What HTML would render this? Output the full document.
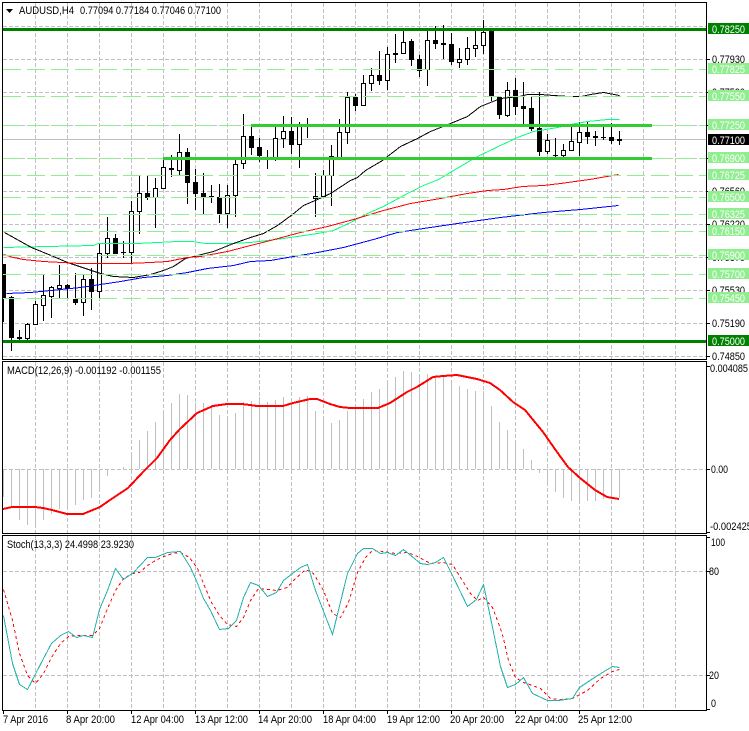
<!DOCTYPE html>
<html>
<head>
<meta charset="utf-8">
<style>
html,body{margin:0;padding:0;background:#fff;width:749px;height:731px;overflow:hidden}
svg{display:block}
text{font-family:"Liberation Sans",sans-serif;font-size:11px;fill:#000}
.w{fill:#fff}
</style>
</head>
<body>
<svg width="749" height="731" viewBox="0 0 749 731" xmlns="http://www.w3.org/2000/svg">
<rect width="749" height="731" fill="#fff"/>

<!-- grid -->
<g shape-rendering="crispEdges" stroke="#c0c0c0" stroke-width="1" stroke-dasharray="4 2" fill="none">
<path d="M35.5 3V359M67.5 3V359M99.5 3V359M131.5 3V359M163.5 3V359M195.5 3V359M227.5 3V359M259.5 3V359M291.5 3V359M323.5 3V359M355.5 3V359M387.5 3V359M419.5 3V359M451.5 3V359M483.5 3V359M515.5 3V359M547.5 3V359M579.5 3V359M611.5 3V359M643.5 3V359M675.5 3V359"/>
<path d="M3 26.5H706M3 59.5H706M3 92.5H706M3 125.5H706M3 158.5H706M3 191.5H706M3 224.5H706M3 257.5H706M3 290.5H706M3 323.5H706M3 356.5H706"/>
<path d="M35.5 362V533M67.5 362V533M99.5 362V533M131.5 362V533M163.5 362V533M195.5 362V533M227.5 362V533M259.5 362V533M291.5 362V533M323.5 362V533M355.5 362V533M387.5 362V533M419.5 362V533M451.5 362V533M483.5 362V533M515.5 362V533M547.5 362V533M579.5 362V533M611.5 362V533M643.5 362V533M675.5 362V533"/>
<path d="M3 469.5H706"/>
<path d="M35.5 536V710M67.5 536V710M99.5 536V710M131.5 536V710M163.5 536V710M195.5 536V710M227.5 536V710M259.5 536V710M291.5 536V710M323.5 536V710M355.5 536V710M387.5 536V710M419.5 536V710M451.5 536V710M483.5 536V710M515.5 536V710M547.5 536V710M579.5 536V710M611.5 536V710M643.5 536V710M675.5 536V710"/>
<path d="M3 571.5H706M3 675.5H706"/>
</g>
<path shape-rendering="crispEdges" stroke="#c0c0c0" d="M3 139.5H706"/>

<!-- candles -->
<g shape-rendering="crispEdges">
<path stroke="#000" fill="none" d="M3.5 264V322M11.5 296V351M19.5 330V342M27.5 323V343M35.5 301V325M43.5 275V321M51.5 286V318M59.5 265V299M67.5 284V299M75.5 273V305M83.5 274V316M91.5 268V310M99.5 244V298M107.5 217V258M115.5 234V254M123.5 241V258M131.5 201V263M139.5 175V234M147.5 175V200M155.5 178V228M163.5 159V189M171.5 155V177M179.5 134V175M187.5 148V204M195.5 169V210M203.5 173V214M211.5 185V203M219.5 184V223M227.5 185V228M235.5 158V217M243.5 114V169M251.5 127V155M259.5 138V162M267.5 150V169M275.5 124V161M283.5 116V148M291.5 117V154M299.5 122V168M307.5 118V138M315.5 173V217M323.5 170V198M331.5 145V206M339.5 119V158M347.5 92V144M355.5 94V111M363.5 75V106M371.5 68V91M379.5 51V85M387.5 47V90M395.5 34V63M403.5 28V54M411.5 39V66M419.5 55V77M427.5 31V86M435.5 26V49M443.5 25V59M451.5 33V65M459.5 48V68M467.5 37V65M475.5 28V57M483.5 20V54M491.5 28V101M499.5 97V119M507.5 82V117M515.5 78V115M523.5 82V127M531.5 96V131M539.5 92V156M547.5 134V154M555.5 138V159M563.5 144V159M571.5 124V151M579.5 122V156M587.5 121V144M595.5 131V146M603.5 127V140M611.5 123V144M619.5 131V145"/>
<path fill="#000" d="M3 264h3v34h-3zM9 297h5v41h-5zM17 337h5v2h-5zM65 285h5v4h-5zM73 299h5v4h-5zM89 279h5v13h-5zM113 238h5v16h-5zM121 252h5v1h-5zM145 193h5v5h-5zM169 168h5v2h-5zM185 152h5v31h-5zM193 182h5v12h-5zM201 193h5v5h-5zM209 196h5v1h-5zM217 197h5v17h-5zM249 136h5v12h-5zM257 147h5v9h-5zM265 158h5v1h-5zM289 131h5v14h-5zM305 125h5v2h-5zM353 97h5v9h-5zM377 75h5v6h-5zM393 53h5v2h-5zM409 41h5v19h-5zM417 59h5v12h-5zM433 40h5v4h-5zM441 43h5v2h-5zM449 44h5v18h-5zM489 31h5v66h-5zM497 97h5v18h-5zM513 90h5v17h-5zM521 106h5v3h-5zM529 108h5v21h-5zM537 128h5v24h-5zM553 155h5v1h-5zM585 132h5v5h-5zM593 136h5v2h-5zM601 137h5v1h-5zM609 137h5v4h-5zM617 139h5v2h-5z"/>
<path fill="#fff" stroke="#000" d="M25.5 324.5h4v14h-4zM33.5 304.5h4v20h-4zM41.5 295.5h4v10h-4zM49.5 287.5h4v9h-4zM57.5 285.5h4v3h-4zM81.5 279.5h4v23h-4zM97.5 253.5h4v38h-4zM105.5 238.5h4v15h-4zM129.5 211.5h4v41h-4zM137.5 193.5h4v18h-4zM153.5 188.5h4v9h-4zM161.5 167.5h4v21h-4zM177.5 152.5h4v18h-4zM225.5 195.5h4v18h-4zM233.5 164.5h4v31h-4zM241.5 136.5h4v27h-4zM273.5 138.5h4v20h-4zM281.5 131.5h4v7h-4zM297.5 126.5h4v18h-4zM313.5 196.5h4v2h-4zM321.5 175.5h4v21h-4zM329.5 156.5h4v19h-4zM337.5 132.5h4v25h-4zM345.5 97.5h4v35h-4zM361.5 83.5h4v22h-4zM369.5 75.5h4v8h-4zM385.5 54.5h4v26h-4zM401.5 42.5h4v11h-4zM425.5 40.5h4v29h-4zM457.5 59.5h4v3h-4zM465.5 48.5h4v11h-4zM473.5 45.5h4v3h-4zM481.5 32.5h4v13h-4zM505.5 90.5h4v25h-4zM545.5 140.5h4v11h-4zM561.5 150.5h4v5h-4zM569.5 141.5h4v9h-4zM577.5 132.5h4v10h-4z"/>
</g>

<!-- moving averages -->
<g shape-rendering="crispEdges" fill="none" stroke-width="1" transform="translate(.5 .5)">
<polyline stroke="#00ff7f" points="3,247 47,246 93,245 98,243 137,243 157,242 177,241 192,241 205,243 230,243 250,242 283,238 317,233 333,230 350,222 367,213 383,206 407,193 423,185 438,179 470,160 477,156 500,145 517,137 533,131 557,127 570,124 587,121 607,119 619,119"/>
<polyline stroke="#000" points="4,232 31,247 53,256 67,262 100,273 113,276 133,277 150,274 163,270 173,266 185,258 197,255 213,251 233,243 250,237 263,233 277,225 292,214 303,205 317,199 330,193 350,180 357,177 365,170 382,160 387,156 400,146 417,138 430,131 450,123 467,116 480,106 500,98 519,96 527,94 540,94 553,95 568,96 581,96 590,94 603,92 619,95"/>
<polyline stroke="#f00" points="3,254 13,257 23,259 43,261 80,263 127,263 150,262 167,261 187,257 200,256 227,251 250,245 270,240 300,232 327,226 353,219 383,210 410,203 440,198 467,193 487,190 503,189 522,186 543,185 560,183 589,179 618,174"/>
<polyline stroke="#00f" points="6,293 30,292 60,289 80,287 100,284 120,281 143,277 167,275 187,272 207,268 233,265 250,261 270,260 293,256 317,252 343,247 373,239 397,232 423,228 457,223 500,217 517,215 543,212 580,209 618,205"/>
</g>

<!-- horizontal levels -->
<g shape-rendering="crispEdges" fill="none">
<path stroke="#90ee90" stroke-dasharray="18 6" d="M3 69.5H706M3 96.5H706M3 125.5H706M3 158.5H706M3 175.5H706M3 197.5H706M3 214.5H706M3 231.5H706M3 255.5H706M3 274.5H706M3 298.5H706"/>
<path stroke="#32cd32" stroke-width="3" d="M251 125.5H652M163 158.5H652"/>
<path stroke="#008000" stroke-width="3" d="M3 29.5H706M3 341.5H706"/>
</g>

<!-- MACD -->
<path shape-rendering="crispEdges" stroke="#c0c0c0" fill="none" d="M3.5 469V497M11.5 469V508M19.5 469V520M27.5 469V525M35.5 469V528M43.5 469V520M51.5 469V514M59.5 469V509M67.5 469V510M75.5 469V505M83.5 469V500M91.5 469V498M99.5 469V488M107.5 469V476M123.5 469V467M131.5 469V452M139.5 469V440M147.5 469V431M155.5 469V422M163.5 469V410M171.5 469V403M179.5 469V394M187.5 469V395M195.5 469V403M203.5 469V403M211.5 469V405M219.5 469V415M227.5 469V416M235.5 469V413M243.5 469V402M251.5 469V401M259.5 469V397M267.5 469V402M275.5 469V400M283.5 469V397M291.5 469V404M299.5 469V397M307.5 469V396M315.5 469V411M323.5 469V420M331.5 469V423M339.5 469V420M347.5 469V411M355.5 469V405M363.5 469V399M371.5 469V392M379.5 469V389M387.5 469V380M395.5 469V377M403.5 469V371M411.5 469V372M419.5 469V374M427.5 469V374M435.5 469V375M443.5 469V375M451.5 469V380M459.5 469V386M467.5 469V389M475.5 469V391M483.5 469V391M491.5 469V406M499.5 469V422M507.5 469V430M515.5 469V440M523.5 469V449M531.5 469V460M539.5 469V473M547.5 469V484M555.5 469V492M563.5 469V498M571.5 469V501M579.5 469V502M587.5 469V501M595.5 469V501M603.5 469V499M611.5 469V499M619.5 469V498"/>
<polyline shape-rendering="crispEdges" fill="none" stroke="#f00" stroke-width="2" points="3,509 12,507 35,507 43,508 52,510 67,514 83,514 100,507 110,500 128,488 143,472 157,458 170,440 180,429 197,413 213,406 227,404 242,404 250,405 257,406 283,406 293,403 310,399 317,399 330,404 340,407 350,408 378,408 390,403 407,392 417,387 433,377 443,376 457,375 477,379 490,383 500,390 513,402 525,410 543,432 557,452 568,467 580,478 595,490 607,497 619,499"/>

<!-- Stoch -->
<g shape-rendering="crispEdges" fill="none" transform="translate(.5 .5)">
<polyline stroke="#f00" stroke-dasharray="3 3" points="3,589 12,620 19,653 27,675 35,683 43,673 51,657 60,643 68,636 76,635 92,635 99,628 107,608 115,590 123,578 132,573 139,572 147,565 155,560 163,556 172,553 180,552 189,557 197,568 203,583 211,602 219,615 227,624 236,626 243,617 250,600 258,588 267,589 276,590 287,587 293,580 305,569 313,573 323,590 332,613 340,617 348,602 357,572 365,557 372,550 383,551 395,553 407,552 417,556 430,563 443,562 452,564 460,577 470,593 477,600 483,597 492,607 500,628 503,638 508,660 515,677 523,682 532,685 540,688 550,698 558,699 572,698 587,690 600,678 612,671 619,669"/>
<polyline stroke="#20b2aa" points="3,615 12,663 19,684 27,689 43,658 51,643 60,635 68,631 76,637 83,635 92,637 99,609 107,590 115,568 123,579 133,572 147,557 155,557 167,552 180,551 190,567 195,578 203,598 210,610 219,629 228,628 236,620 243,597 250,582 258,585 267,596 276,592 283,580 292,573 300,567 307,564 315,590 332,634 347,573 357,553 363,548 372,548 380,553 387,552 395,555 403,549 420,563 427,564 435,562 443,557 452,575 467,606 476,599 483,584 490,617 500,666 507,687 515,684 523,677 532,693 547,700 558,700 572,698 579,687 597,675 612,666 619,667"/>
</g>

<!-- frames -->
<path shape-rendering="crispEdges" fill="none" stroke="#000" d="M2.5 2.5H706.5V359.5H2.5ZM2.5 361.5H706.5V533.5H2.5ZM2.5 535.5H706.5V710.5H2.5Z"/>

<!-- ticks -->
<path shape-rendering="crispEdges" fill="none" stroke="#000" d="M707 59.5h3M707 92.5h3M707 125.5h3M707 158.5h3M707 191.5h3M707 224.5h3M707 257.5h3M707 290.5h3M707 323.5h3M707 356.5h3M707 366.5h3M707 469.5h3M707 532.5h3M707 537.5h3M707 571.5h3M707 675.5h3M707 709.5h3M3.5 711v3M67.5 711v3M131.5 711v3M195.5 711v3M259.5 711v3M323.5 711v3M387.5 711v3M451.5 711v3M515.5 711v3M579.5 711v3"/>

<!-- header text -->
<path d="M6 9h7l-3.5 4z" fill="#000"/>
<text x="19" y="14" textLength="55" lengthAdjust="spacingAndGlyphs">AUDUSD,H4</text>
<text x="80" y="14" textLength="141" lengthAdjust="spacingAndGlyphs">0.77094 0.77184 0.77046 0.77100</text>
<text x="7" y="374" textLength="154" lengthAdjust="spacingAndGlyphs">MACD(12,26,9) -0.001192 -0.001155</text>
<text x="7" y="548" textLength="127" lengthAdjust="spacingAndGlyphs">Stoch(13,3,3) 24.4998 23.9230</text>

<!-- right axis -->
<g>
<text x="712" y="63" textLength="33" lengthAdjust="spacingAndGlyphs">0.77930</text>
<text x="712" y="96" textLength="33" lengthAdjust="spacingAndGlyphs">0.77590</text>
<text x="712" y="195" textLength="33" lengthAdjust="spacingAndGlyphs">0.76560</text>
<text x="712" y="228" textLength="33" lengthAdjust="spacingAndGlyphs">0.76220</text>
<text x="712" y="261" textLength="33" lengthAdjust="spacingAndGlyphs">0.75870</text>
<text x="712" y="294" textLength="33" lengthAdjust="spacingAndGlyphs">0.75530</text>
<text x="712" y="327" textLength="33" lengthAdjust="spacingAndGlyphs">0.75190</text>
<text x="712" y="360" textLength="33" lengthAdjust="spacingAndGlyphs">0.74850</text>
</g>
<g shape-rendering="crispEdges">
<rect x="708" y="23" width="41" height="11" fill="#008000"/>
<rect x="708" y="63" width="41" height="11" fill="#90ee90"/>
<rect x="708" y="90" width="41" height="11" fill="#90ee90"/>
<rect x="708" y="119" width="41" height="11" fill="#90ee90"/>
<rect x="708" y="134" width="41" height="11" fill="#000"/>
<rect x="708" y="152" width="41" height="11" fill="#90ee90"/>
<rect x="708" y="169" width="41" height="11" fill="#90ee90"/>
<rect x="708" y="191" width="41" height="11" fill="#90ee90"/>
<rect x="708" y="208" width="41" height="11" fill="#90ee90"/>
<rect x="708" y="225" width="41" height="11" fill="#90ee90"/>
<rect x="708" y="249" width="41" height="11" fill="#90ee90"/>
<rect x="708" y="268" width="41" height="11" fill="#90ee90"/>
<rect x="708" y="292" width="41" height="11" fill="#90ee90"/>
<rect x="708" y="335" width="41" height="11" fill="#008000"/>
</g>
<g class="w">
<text class="w" x="712" y="33" textLength="33" lengthAdjust="spacingAndGlyphs">0.78250</text>
<text class="w" x="712" y="73" textLength="33" lengthAdjust="spacingAndGlyphs">0.77825</text>
<text class="w" x="712" y="100" textLength="33" lengthAdjust="spacingAndGlyphs">0.77550</text>
<text class="w" x="712" y="129" textLength="33" lengthAdjust="spacingAndGlyphs">0.77250</text>
<text class="w" x="712" y="144" textLength="33" lengthAdjust="spacingAndGlyphs">0.77100</text>
<text class="w" x="712" y="162" textLength="33" lengthAdjust="spacingAndGlyphs">0.76900</text>
<text class="w" x="712" y="179" textLength="33" lengthAdjust="spacingAndGlyphs">0.76725</text>
<text class="w" x="712" y="201" textLength="33" lengthAdjust="spacingAndGlyphs">0.76500</text>
<text class="w" x="712" y="218" textLength="33" lengthAdjust="spacingAndGlyphs">0.76325</text>
<text class="w" x="712" y="235" textLength="33" lengthAdjust="spacingAndGlyphs">0.76150</text>
<text class="w" x="712" y="259" textLength="33" lengthAdjust="spacingAndGlyphs">0.75900</text>
<text class="w" x="712" y="278" textLength="33" lengthAdjust="spacingAndGlyphs">0.75700</text>
<text class="w" x="712" y="302" textLength="33" lengthAdjust="spacingAndGlyphs">0.75450</text>
<text class="w" x="712" y="345" textLength="33" lengthAdjust="spacingAndGlyphs">0.75000</text>
</g>

<!-- indicator axis -->
<text x="710" y="372" textLength="38" lengthAdjust="spacingAndGlyphs">0.004085</text>
<text x="711" y="473" textLength="17" lengthAdjust="spacingAndGlyphs">0.00</text>
<text x="710" y="530" textLength="42" lengthAdjust="spacingAndGlyphs">-0.002425</text>
<text x="711" y="546" textLength="14" lengthAdjust="spacingAndGlyphs">100</text>
<text x="709" y="575" textLength="10" lengthAdjust="spacingAndGlyphs">80</text>
<text x="709" y="679" textLength="10" lengthAdjust="spacingAndGlyphs">20</text>
<text x="711" y="707" textLength="5" lengthAdjust="spacingAndGlyphs">0</text>

<!-- time axis -->
<text x="3" y="723" textLength="45" lengthAdjust="spacingAndGlyphs">7 Apr 2016</text>
<text x="66" y="723" textLength="49" lengthAdjust="spacingAndGlyphs">8 Apr 20:00</text>
<text x="131" y="723" textLength="53" lengthAdjust="spacingAndGlyphs">12 Apr 04:00</text>
<text x="195" y="723" textLength="53" lengthAdjust="spacingAndGlyphs">13 Apr 12:00</text>
<text x="258" y="723" textLength="54" lengthAdjust="spacingAndGlyphs">14 Apr 20:00</text>
<text x="323" y="723" textLength="53" lengthAdjust="spacingAndGlyphs">18 Apr 04:00</text>
<text x="387" y="723" textLength="53" lengthAdjust="spacingAndGlyphs">19 Apr 12:00</text>
<text x="450" y="723" textLength="54" lengthAdjust="spacingAndGlyphs">20 Apr 20:00</text>
<text x="515" y="723" textLength="53" lengthAdjust="spacingAndGlyphs">22 Apr 04:00</text>
<text x="578" y="723" textLength="54" lengthAdjust="spacingAndGlyphs">25 Apr 12:00</text>
</svg>
</body>
</html>
